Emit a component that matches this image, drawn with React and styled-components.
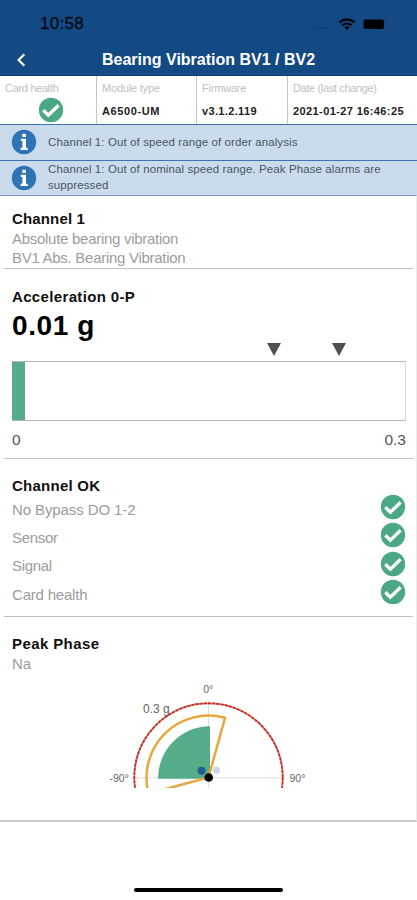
import React from 'react';
import styled, { createGlobalStyle } from 'styled-components';

const messages = [
    { text: 'Channel 1: Out of speed range of order analysis' },
    { text: 'Channel 1: Out of nominal speed range. Peak Phase alarms are suppressed' },
];

const checks = [
    { label: 'No Bypass DO 1-2', spacing: -0.1 },
    { label: 'Sensor', spacing: -0.3 },
    { label: 'Signal', spacing: -0.3 },
    { label: 'Card health', spacing: -0.2 },
];

const CheckIcon = () => (
    <svg width="26" height="26" viewBox="0 0 26 26">
        <circle cx="13" cy="13" r="12.2" fill="#4ba884" />
        <path d="M5.3 13.2L10.4 18.2L20.6 8.3" fill="none" stroke="#fff" strokeWidth="3.3" />
    </svg>
);

const InfoIcon = () => (
    <svg width="26" height="26" viewBox="0 0 26 26">
        <circle cx="13" cy="13" r="12.2" fill="#2f73b5" />
        <rect x="11.2" y="4.8" width="3.8" height="3.2" rx="0.8" fill="#fff" />
        <path d="M9.8 9.8h5.2v9h1.7v2.2H9.6v-2.2h1.8V12H9.8z" fill="#fff" />
    </svg>
);

const PhaseGauge = () => (
    <svg width="208" height="108" viewBox="104 680 208 108">
        <path d="M208.5 700V788M130 777.8H285" stroke="#dedede" strokeWidth="1" />
        <circle cx="208.5" cy="777.5" r="74.2" fill="none" stroke="#e08a83" strokeWidth="1.7" />
        <circle cx="208.5" cy="777.5" r="74.2" fill="none" stroke="#c82b22" strokeWidth="1.7" strokeDasharray="3.2 1" />
        <path d="M210 778.7V726.3A52 52 0 0 0 158 778.7Z" fill="#54ad88" />
        <path
            d="M208.5 777.5L225 717.8A62 62 0 0 0 148.6 793.5Z"
            fill="none"
            stroke="#e5a83f"
            strokeWidth="2.5"
        />
        <circle cx="201.5" cy="770.8" r="4" fill="#235c91" />
        <circle cx="216.5" cy="770.3" r="3.5" fill="#c8d8e8" />
        <circle cx="208.7" cy="777.5" r="4.3" fill="#000" />
        <g fontFamily="'Liberation Sans', Arial, sans-serif" fontSize="10.5" fill="#666">
            <text x="203.2" y="693">0°</text>
            <text x="143" y="713" fontSize="12">0.3 g</text>
            <text x="109.5" y="782">-90°</text>
            <text x="289.5" y="782">90°</text>
        </g>
    </svg>
);

const App = () => {
    return (
        <Screen>
            <GlobalStyle />
            <StatusBar>
                <Clock>10:58</Clock>
                <StatusIcons>
                    <svg width="78" height="16" viewBox="0 0 78 16">
                        <path d="M2 12.3H20" stroke="#0d3a6c" strokeWidth="1.2" strokeDasharray="3.5 1.5" />
                        <g fill="none" stroke="#000" strokeWidth="2">
                            <path d="M27.5 6.4A11 11 0 0 1 42.5 6.4" />
                            <path d="M30.3 9.2A7 7 0 0 1 39.7 9.2" />
                        </g>
                        <path d="M32.3 11.2Q35 9.3 37.7 11.2L35 14Z" />
                        <rect x="51.5" y="3.5" width="20.5" height="9.5" rx="2" />
                        <path d="M73.5 6.3Q76 8.2 73.5 10.2Z" fill="#0b325d" />
                    </svg>
                </StatusIcons>
            </StatusBar>
            <NavBar>
                <svg width="10" height="16" viewBox="0 0 10 16">
                    <path d="M8.3 2.3L2.6 8L8.3 13.7" fill="none" stroke="#fff" strokeWidth="2.1" />
                </svg>
                <NavTitle>Bearing Vibration BV1 / BV2</NavTitle>
            </NavBar>
            <InfoGrid>
                <InfoCell $first>
                    <InfoLabel $spacing={-0.3}>Card health</InfoLabel>
                    <HealthIcon><CheckIcon /></HealthIcon>
                </InfoCell>
                <InfoCell>
                    <InfoLabel $spacing={-0.2}>Module type</InfoLabel>
                    <InfoValue $spacing={0.6}>A6500-UM</InfoValue>
                </InfoCell>
                <InfoCell>
                    <InfoLabel $spacing={-0.2}>Firmware</InfoLabel>
                    <InfoValue $spacing={0.35}>v3.1.2.119</InfoValue>
                </InfoCell>
                <InfoCell>
                    <InfoLabel $spacing={-0.35}>Date (last change)</InfoLabel>
                    <InfoValue $spacing={0.4}>2021-01-27 16:46:25</InfoValue>
                </InfoCell>
            </InfoGrid>
            {messages.map((message) => (
                <Message key={message.text}>
                    <InfoIcon />
                    <span>{message.text}</span>
                </Message>
            ))}
            <Content>
                <Section $height={73} $top={13}>
                    <SectionTitle $spacing={0.15}>Channel 1</SectionTitle>
                    <Line $spacing={-0.28}>Absolute bearing vibration</Line>
                    <Line $spacing={-0.28}>BV1 Abs. Bearing Vibration</Line>
                </Section>
                <Section $height={190} $top={18}>
                    <SectionTitle $spacing={0.35}>Acceleration 0-P</SectionTitle>
                    <Value>0.01 g</Value>
                    <Markers>
                        <Marker />
                        <Marker />
                    </Markers>
                    <Bar><BarFill /></Bar>
                    <Scale>
                        <span>0</span>
                        <span>0.3</span>
                    </Scale>
                </Section>
                <Section $height={158} $top={17}>
                    <SectionTitle $spacing={0.25}>Channel OK</SectionTitle>
                    <CheckList>
                        {checks.map((check) => (
                            <CheckRow key={check.label}>
                                <Line $spacing={check.spacing}>{check.label}</Line>
                                <CheckIcon />
                            </CheckRow>
                        ))}
                    </CheckList>
                </Section>
                <Section $height={203} $top={17} $last>
                    <SectionTitle $spacing={0.4}>Peak Phase</SectionTitle>
                    <Line>Na</Line>
                    <GaugeWrap><PhaseGauge /></GaugeWrap>
                </Section>
            </Content>
            <Footer><HomeIndicator /></Footer>
        </Screen>
    );
};

export default App;

const GlobalStyle = createGlobalStyle`
  * {
    box-sizing: border-box;
  }

  body {
    margin: 0;
    background: #fff;
    font-family: 'Liberation Sans', Arial, sans-serif;
  }

  svg {
    display: block;
    flex-shrink: 0;
  }
`;

const Screen = styled.div`
  display: flex;
  flex-direction: column;
  width: 417px;
  height: 900px;
  overflow: hidden;
  background: #fff;
`;

const StatusBar = styled.div`
  display: flex;
  justify-content: space-between;
  height: 44px;
  padding: 14px 27px 0 40px;
  background: #134a83;
`;

const Clock = styled.div`
  font-size: 17px;
  line-height: 20px;
  letter-spacing: 0.3px;
  color: #020a14;
  -webkit-text-stroke: 0.3px #020a14;
`;

const StatusIcons = styled.div`
  padding-top: 2px;
`;

const NavBar = styled.div`
  display: flex;
  align-items: center;
  height: 32px;
  padding-left: 16px;
  background: #134a83;
  border-bottom: 1px solid #0a3a7c;
`;

const NavTitle = styled.h1`
  margin: 0 0 0 76px;
  font-size: 16px;
  font-weight: bold;
  color: #fff;
  white-space: nowrap;
`;

const InfoGrid = styled.div`
  display: grid;
  grid-template-columns: 96px 100px 91px 130px;
  height: 48px;
`;

const InfoCell = styled.div`
  padding: 5px 0 0 5px;
  border-left: ${(props) => (props.$first ? 'none' : '1px solid #c4c4c8')};
  white-space: nowrap;
`;

const InfoLabel = styled.div`
  font-size: 11px;
  line-height: 14px;
  letter-spacing: ${(props) => props.$spacing}px;
  color: #c0c0c0;
`;

const InfoValue = styled.div`
  margin-top: 9px;
  font-size: 11px;
  font-weight: bold;
  line-height: 14px;
  letter-spacing: ${(props) => props.$spacing}px;
  color: #222;
`;

const HealthIcon = styled.div`
  display: flex;
  justify-content: center;
  margin-top: 2px;
`;

const Message = styled.div`
  display: flex;
  align-items: center;
  gap: 11px;
  height: 35.5px;
  padding: 0 30px 0 11px;
  border-top: 1px solid #3f73b3;
  background: #c9dbed;
  font-size: 11.5px;
  line-height: 15.5px;
  letter-spacing: 0.1px;
  color: #4a5664;
`;

const Content = styled.main`
  height: 627px;
  padding: 0 3px 0 4px;
  border-top: 1px solid #7e9fcd;
  border-right: 1px solid #ececec;
  border-bottom: 2px solid #c9c9c9;
`;

const Section = styled.section`
  height: ${(props) => props.$height}px;
  padding: ${(props) => props.$top}px 8px 0;
  border-bottom: ${(props) => (props.$last ? 'none' : '1px solid #c0c0c0')};
`;

const SectionTitle = styled.h2`
  margin: 0;
  font-size: 15px;
  font-weight: bold;
  line-height: 20px;
  letter-spacing: ${(props) => props.$spacing}px;
  color: #111;
`;

const Line = styled.div`
  font-size: 15px;
  line-height: 19px;
  letter-spacing: ${(props) => props.$spacing || 0}px;
  color: #9c9c9c;
`;

const Value = styled.div`
  margin-top: 2px;
  font-size: 28px;
  font-weight: bold;
  line-height: 34px;
  letter-spacing: 0.6px;
  color: #000;
`;

const Markers = styled.div`
  display: flex;
  gap: 50.5px;
  padding-left: 255px;
  height: 18px;
`;

const Marker = styled.div`
  width: 0;
  height: 0;
  border-left: 7.5px solid transparent;
  border-right: 7.5px solid transparent;
  border-top: 13.5px solid #505050;
`;

const Bar = styled.div`
  width: 394px;
  height: 60px;
  border: 1px solid #b5b5b5;
  border-right-color: #d9d9d9;
  border-left: none;
`;

const BarFill = styled.div`
  width: 13px;
  height: 100%;
  background: #57ab8a;
`;

const Scale = styled.div`
  display: flex;
  justify-content: space-between;
  width: 394px;
  margin-top: 9px;
  font-size: 15.5px;
  line-height: 20px;
  color: #555;
`;

const CheckList = styled.div`
  margin-top: -1px;
`;

const CheckRow = styled.div`
  display: flex;
  align-items: center;
  justify-content: space-between;
  width: 394px;
  height: 28.3px;

  svg {
    margin-top: -4px;
  }
`;

const GaugeWrap = styled.div`
  margin: 7px 0 0 92px;
`;

const Footer = styled.footer`
  display: flex;
  flex: 1;
  align-items: flex-end;
  justify-content: center;
  padding-bottom: 8px;
`;

const HomeIndicator = styled.div`
  width: 149px;
  height: 4px;
  border-radius: 2px;
  background: #000;
`;
